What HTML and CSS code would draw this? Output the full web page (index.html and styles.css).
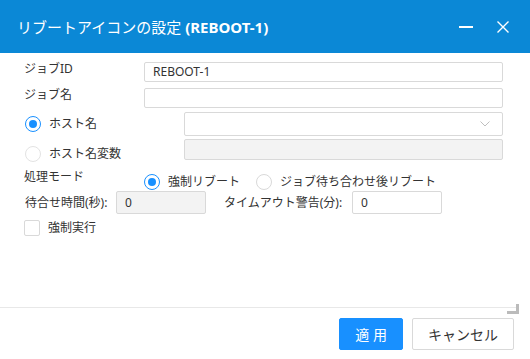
FILE: index.html
```html
<!DOCTYPE html>
<html lang="ja">
<head>
    <meta charset="UTF-8">
    <title>リブートアイコンの設定</title>
    <link rel="stylesheet" href="styles.css">
</head>
<body>
<div class="dialog">
    <div class="titlebar">
        <span class="title">リブートアイコンの設定 <b>(REBOOT-1)</b></span>
        <span class="tools">
            <span class="minimize"></span>
            <svg class="close" width="12" height="12" viewBox="0 0 12 12"><path d="M0.5 0.5 L11.5 11.5 M11.5 0.5 L0.5 11.5" stroke="#fff" stroke-width="1.4" fill="none"/></svg>
        </span>
    </div>

    <div class="form">
        <div class="row r1">
            <label class="label">ジョブID</label>
            <div class="input wide">REBOOT-1</div>
        </div>
        <div class="row r2">
            <label class="label">ジョブ名</label>
            <div class="input wide"></div>
        </div>
        <div class="row r3">
            <label class="radio-label"><span class="radio checked"></span>ホスト名</label>
            <div class="input select">
                <svg class="arrow" width="10" height="6" viewBox="0 0 10 6"><path d="M0.5 0.5 L5 5 L9.5 0.5" stroke="#bfbfbf" stroke-width="1" fill="none"/></svg>
            </div>
        </div>
        <div class="row r4">
            <label class="radio-label low"><span class="radio off"></span>ホスト名変数</label>
            <div class="input select disabled"></div>
        </div>
        <div class="row r5">
            <label class="label">処理モード</label>
            <div class="choices">
                <label class="choice"><span class="radio checked"></span>強制リブート</label>
                <label class="choice"><span class="radio"></span>ジョブ待ち合わせ後リブート</label>
            </div>
        </div>
        <div class="row r6">
            <label class="inline-label">待合せ時間(秒):</label>
            <div class="input short disabled">0</div>
            <label class="inline-label second">タイムアウト警告(分):</label>
            <div class="input short">0</div>
        </div>
        <div class="row r7">
            <label class="choice"><span class="checkbox"></span>強制実行</label>
        </div>
    </div>

    <div class="footer">
        <span class="grip"></span>
        <button class="btn primary">適 用</button>
        <button class="btn">キャンセル</button>
    </div>
</div>
</body>
</html>
```

FILE: styles.css
```css
body {
    margin: 0;
    font-family: "Noto Sans", "Noto Sans CJK JP", sans-serif;
    color: #333;
    background: #fff;
}
.dialog {
    width: 530px;
    height: 359px;
    display: flex;
    flex-direction: column;
}
.titlebar {
    height: 53px;
    background-color: #0b88d6;
    color: #fff;
    display: flex;
    align-items: center;
    justify-content: space-between;
    padding: 0 21px 0 17px;
}
.title {
    font-size: 15px;
    line-height: 20px;
    margin-top: 1px;
}
.title b {
    font-weight: 700;
}
.tools {
    display: flex;
    align-items: center;
    gap: 24px;
}
.minimize {
    display: block;
    width: 14px;
    height: 2px;
    background: #fff;
}
.close {
    display: block;
}
.form {
    flex: 1;
    padding: 0 27px 0 24px;
    font-size: 12px;
}
.row {
    display: flex;
    align-items: center;
}
.r1 { margin-top: 9px; align-items: flex-start; }
.r2 { margin-top: 6px; align-items: flex-start; }
.r3 { margin-top: 4px; }
.r4 { margin-top: 3px; align-items: flex-start; }
.r5 { margin-top: 8px; align-items: flex-start; }
.r6 { margin-top: 1px; }
.r7 { margin-top: 6px; }
.label {
    width: 120px;
    line-height: 14px;
    flex-shrink: 0;
}
.input {
    box-sizing: border-box;
    height: 20px;
    border: 1px solid #d9d9d9;
    border-radius: 2px;
    background: #fff;
    line-height: 18px;
    padding: 0 8px;
    font-size: 12px;
    color: #333;
}
.wide {
    width: 359px;
}
.select {
    width: 319px;
    height: 24px;
    display: flex;
    align-items: center;
    justify-content: flex-end;
    padding-right: 12px;
}
.r4 .select {
    height: 21px;
}
.disabled {
    background: #f3f3f3;
}
.radio-label {
    width: 160px;
    display: flex;
    align-items: center;
    gap: 8px;
    line-height: 16px;
    flex-shrink: 0;
    margin-left: 1px;
    margin-right: -1px;
}
.radio-label.low {
    margin-top: 7px;
}
.radio {
    box-sizing: border-box;
    width: 16px;
    height: 16px;
    border: 1px solid #d9d9d9;
    border-radius: 50%;
    background: #fff;
    display: flex;
    align-items: center;
    justify-content: center;
    flex-shrink: 0;
}
.radio.off {
    border-color: #e3e3e3;
}
.radio.checked {
    border-color: #1890ff;
}
.radio.checked::after {
    content: "";
    width: 8px;
    height: 8px;
    border-radius: 50%;
    background: #1890ff;
}
.choices {
    display: flex;
    gap: 16px;
    margin-top: 4px;
}
.choice {
    display: flex;
    align-items: center;
    gap: 8px;
    line-height: 16px;
}
.inline-label {
    width: 91px;
    flex-shrink: 0;
    line-height: 16px;
    margin-left: 1px;
}
.inline-label.second {
    width: 128px;
    margin-left: 18px;
}
.short {
    width: 90px;
    height: 23px;
    line-height: 21px;
}
.checkbox {
    box-sizing: border-box;
    width: 16px;
    height: 16px;
    border: 1px solid #d9d9d9;
    border-radius: 2px;
    background: #fff;
}
.footer {
    position: relative;
    border-top: 1px solid #e8e8e8;
    margin-right: 14px;
    height: 52px;
    display: flex;
    justify-content: flex-end;
    align-items: flex-start;
    gap: 9px;
    padding: 10px 2px 0 0;
    box-sizing: border-box;
}
.grip {
    position: absolute;
    right: -3px;
    top: -4px;
    width: 12px;
    height: 10px;
    border-right: 3px solid #bbb;
    border-bottom: 3px solid #bbb;
    box-sizing: border-box;
}
.btn {
    height: 32px;
    min-width: 63px;
    padding: 0 15px;
    font-family: "Noto Sans", "Noto Sans CJK JP", sans-serif;
    font-size: 14px;
    color: #333;
    background: #fff;
    border: 1px solid #d9d9d9;
    border-radius: 2px;
}
.btn.primary {
    background: #1890ff;
    border-color: #1890ff;
    color: #fff;
}
.btn:last-child {
    width: 102px;
}
```
